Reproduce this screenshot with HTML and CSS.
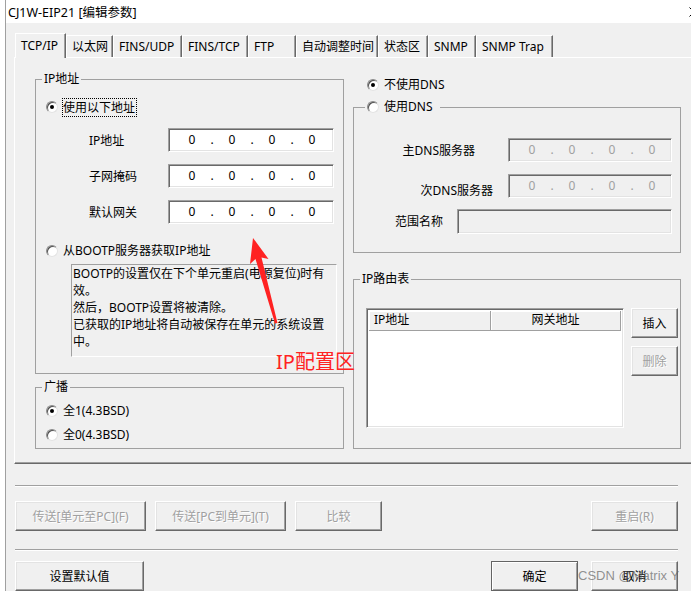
FILE: index.html
```html
<!DOCTYPE html>
<html lang="zh-CN">
<head>
    <meta charset="UTF-8">
    <meta name="viewport" content="width=device-width, initial-scale=1.0">
    <title>CJ1W-EIP21 [编辑参数]</title>
    <link rel="stylesheet" href="styles.css">
</head>
<body>

    <div class="window">
        <div class="titlebar">
            <span class="title">CJ1W-EIP21 [编辑参数]</span>
            <svg class="close" width="10" height="10" viewBox="0 0 10 10">
                <path d="M0.5 0.5 L9.5 9.5 M9.5 0.5 L0.5 9.5" stroke="#000" stroke-width="1" fill="none"/>
            </svg>
        </div>

        <div class="client">
            <!-- 标签页 -->
            <div class="tabs">
                <div class="tab active">TCP/IP</div>
                <div class="tab">以太网</div>
                <div class="tab">FINS/UDP</div>
                <div class="tab">FINS/TCP</div>
                <div class="tab">FTP</div>
                <div class="tab">自动调整时间</div>
                <div class="tab">状态区</div>
                <div class="tab">SNMP</div>
                <div class="tab">SNMP Trap</div>
            </div>

            <div class="panel">
                <!-- 左列 -->
                <div class="col-left">
                    <fieldset class="group ip-group">
                        <legend>IP地址</legend>
                        <div class="radio-row use-addr">
                            <span class="radio checked"></span>
                            <span class="focus">使用以下地址</span>
                        </div>
                        <div class="ip-rows">
                            <div class="ip-row">
                                <span class="ip-label">IP地址</span>
                                <div class="ipbox">
                                    <span class="oct">0</span><span class="dot">.</span><span class="oct">0</span><span class="dot">.</span><span class="oct">0</span><span class="dot">.</span><span class="oct">0</span>
                                </div>
                            </div>
                            <div class="ip-row">
                                <span class="ip-label">子网掩码</span>
                                <div class="ipbox">
                                    <span class="oct">0</span><span class="dot">.</span><span class="oct">0</span><span class="dot">.</span><span class="oct">0</span><span class="dot">.</span><span class="oct">0</span>
                                </div>
                            </div>
                            <div class="ip-row">
                                <span class="ip-label">默认网关</span>
                                <div class="ipbox">
                                    <span class="oct">0</span><span class="dot">.</span><span class="oct">0</span><span class="dot">.</span><span class="oct">0</span><span class="dot">.</span><span class="oct">0</span>
                                </div>
                            </div>
                        </div>
                        <div class="radio-row bootp">
                            <span class="radio"></span>
                            <span class="radio-text">从BOOTP服务器获取IP地址</span>
                        </div>
                        <div class="note">
                            BOOTP的设置仅在下个单元重启(电源复位)时有<br>
                            效。<br>
                            然后，BOOTP设置将被清除。<br>
                            已获取的IP地址将自动被保存在单元的系统设置<br>
                            中。
                        </div>
                    </fieldset>

                    <fieldset class="group bcast-group">
                        <legend>广播</legend>
                        <div class="radio-row">
                            <span class="radio checked"></span>
                            <span class="radio-text">全1(4.3BSD)</span>
                        </div>
                        <div class="radio-row">
                            <span class="radio"></span>
                            <span class="radio-text">全0(4.3BSD)</span>
                        </div>
                    </fieldset>
                </div>

                <!-- 右列 -->
                <div class="col-right">
                    <div class="radio-row no-dns">
                        <span class="radio checked"></span>
                        <span class="radio-text">不使用DNS</span>
                    </div>

                    <fieldset class="group dns-group">
                        <legend class="radio-legend">
                            <span class="radio"></span>
                            <span class="radio-text">使用DNS</span>
                        </legend>
                        <div class="dns-row first">
                            <span class="dns-label primary">主DNS服务器</span>
                            <div class="ipbox disabled">
                                <span class="oct">0</span><span class="dot">.</span><span class="oct">0</span><span class="dot">.</span><span class="oct">0</span><span class="dot">.</span><span class="oct">0</span>
                            </div>
                        </div>
                        <div class="dns-row second">
                            <span class="dns-label secondary">次DNS服务器</span>
                            <div class="ipbox disabled">
                                <span class="oct">0</span><span class="dot">.</span><span class="oct">0</span><span class="dot">.</span><span class="oct">0</span><span class="dot">.</span><span class="oct">0</span>
                            </div>
                        </div>
                        <div class="dns-row third">
                            <span class="dns-label scope">范围名称</span>
                            <div class="textbox disabled"></div>
                        </div>
                    </fieldset>

                    <fieldset class="group route-group">
                        <legend>IP路由表</legend>
                        <div class="route-body">
                            <div class="listview">
                                <div class="list-head">
                                    <div class="col-ip">IP地址</div>
                                    <div class="col-gw">网关地址</div>
                                </div>
                            </div>
                            <div class="route-buttons">
                                <button class="btn small">插入</button>
                                <button class="btn small" disabled>删除</button>
                            </div>
                        </div>
                    </fieldset>
                </div>
            </div>

            <!-- 底部按钮 -->
            <div class="footer">
                <div class="sep first"></div>
                <div class="btn-row">
                    <button class="btn send-a" disabled>传送[单元至PC](F)</button>
                    <button class="btn send-b" disabled>传送[PC到单元](T)</button>
                    <button class="btn compare" disabled>比较</button>
                    <button class="btn restart" disabled>重启(R)</button>
                </div>
                <div class="sep second"></div>
                <div class="btn-row last">
                    <button class="btn defaults">设置默认值</button>
                    <button class="btn ok">确定</button>
                    <button class="btn cancel">取消</button>
                </div>
            </div>
        </div>
    </div>

    <!-- 标注 -->
    <svg class="arrow" width="691" height="591" viewBox="0 0 691 591">
        <polygon points="253,238 268.5,259 261.5,257.5 277.5,323 275,323.5 255.5,259 250,264" fill="#f22"/>
    </svg>
    <div class="callout">IP配置区</div>
    <div class="watermark">CSDN @Matrix Y</div>

</body>
</html>
```

FILE: styles.css
```css
/* 基本 */
* {
    box-sizing: border-box;
}

body {
    margin: 0;
    width: 691px;
    height: 591px;
    overflow: hidden;
    position: relative;
    background: #fff;
    font-family: "Noto Sans", "Noto Sans CJK SC", sans-serif;
    font-size: 12px;
    color: #000;
}

/* 窗口 */
.window {
    margin-left: 5px;
    width: 700px;
    height: 591px;
    border-left: 1px solid #a0a0a0;
}

.titlebar {
    height: 23px;
    display: flex;
    align-items: center;
    padding-left: 2px;
    background: #fff;
    font-size: 12.5px;
}

.close {
    margin-left: auto;
    margin-right: 6px;
}

.client {
    height: 568px;
    padding: 10px 0 0 8px;
    background: #f0f0f0;
}

/* 标签页 */
.tabs {
    display: flex;
    align-items: flex-end;
    height: 24px;
    margin-left: 1px;
}

.tab {
    height: 22px;
    padding: 3px 0 0 5px;
    line-height: 16px;
    border: 1px solid;
    border-bottom: none;
    border-color: #fff #696969 transparent #fff;
    box-shadow: inset -1px 0 0 #a0a0a0;
    background: #f0f0f0;
    white-space: nowrap;
}

.tab.active {
    height: 25px;
    margin-bottom: -1px;
    padding-top: 4px;
    position: relative;
    z-index: 1;
}

.tab:nth-child(1) { width: 51px; }
.tab:nth-child(2) { width: 47px; }
.tab:nth-child(3) { width: 69px; }
.tab:nth-child(4) { width: 66px; }
.tab:nth-child(5) { width: 48px; }
.tab:nth-child(6) { width: 82px; }
.tab:nth-child(7) { width: 50px; }
.tab:nth-child(8) { width: 48px; }
.tab:nth-child(9) { width: 77px; }

.panel {
    width: 690px;
    height: 407px;
    display: flex;
    gap: 9px;
    padding: 13px 0 0 20px;
    border: 1px solid;
    border-color: #fff #696969 #696969 #fff;
    box-shadow: inset -1px -1px 0 #a0a0a0;
}

/* 分组框 */
.group {
    margin: 0;
    padding: 0;
    min-width: 0;
    border: 1px solid #a0a0a0;
}

.group legend {
    margin-left: 6px;
    padding: 0 2px;
    line-height: 16px;
    height: 16px;
}

.col-left {
    width: 309px;
}

.col-right {
    width: 328px;
}

/* 单选框 */
.radio-row {
    display: flex;
    align-items: center;
    height: 20px;
    padding-left: 10px;
}

.radio {
    flex: none;
    width: 12px;
    height: 12px;
    border-radius: 50%;
    background: #fff;
    border: 1px solid;
    border-color: #8a8a8a #e3e3e3 #e3e3e3 #8a8a8a;
    box-shadow: inset 1px 1px 0 #505050;
    position: relative;
}

.radio.checked::after {
    content: "";
    position: absolute;
    left: 3px;
    top: 3px;
    width: 4px;
    height: 4px;
    border-radius: 50%;
    background: #000;
}

.radio-text {
    margin-left: 5px;
    line-height: 16px;
}

.focus {
    margin-left: 4px;
    border: 1px dotted #000;
    line-height: 17px;
    padding-right: 1px;
}

/* IP地址 */
.use-addr {
    margin-top: 10px;
}

.ip-rows {
    display: flex;
    flex-direction: column;
    gap: 12px;
    margin-top: 11px;
}

.ip-row {
    display: flex;
    align-items: center;
    padding-left: 53px;
}

.ip-label {
    width: 79px;
}

.ipbox {
    width: 166px;
    height: 24px;
    display: flex;
    align-items: center;
    padding-left: 9px;
    background: #fff;
    border: 1px solid;
    border-color: #a0a0a0 #fff #fff #a0a0a0;
    box-shadow: inset 1px 1px 0 #696969, inset -1px -1px 0 #e3e3e3;
    padding-bottom: 2px;
}

.ipbox.disabled {
    width: 164px;
    background: #f0f0f0;
    color: #a0a0a0;
}

.oct {
    width: 28px;
    text-align: center;
}

.dot {
    width: 12px;
    text-align: center;
}

.bootp {
    margin-top: 17px;
}

.note {
    margin: 3px 0 16px 35px;
    width: 266px;
    height: 93px;
    padding: 0 0 0 1px;
    line-height: 17px;
    white-space: nowrap;
    border: 1px solid;
    border-color: #a0a0a0 #fff #fff #a0a0a0;
}

/* 广播 */
.bcast-group {
    margin-top: 5px;
    padding-bottom: 3px;
}

.bcast-group .radio-row {
    margin-top: 4px;
}

.bcast-group .radio-row:first-of-type {
    margin-top: 6px;
}

/* DNS */
.no-dns {
    margin-top: 4px;
    padding-left: 14px;
}

.dns-group {
    margin-top: 4px;
    padding-bottom: 19px;
}

.dns-group .radio-legend {
    margin-left: 11px;
    display: flex;
    align-items: center;
    padding-right: 8px;
}

.dns-row {
    display: flex;
    justify-content: flex-end;
    align-items: center;
    height: 24px;
    padding-right: 8px;
}

.dns-row.first { margin-top: 23px; }
.dns-row.second { margin-top: 12px; }
.dns-row.third { margin-top: 11px; }

.dns-label.primary { margin-right: 33px; }
.dns-label.secondary { margin-right: 15px; padding-top: 8px; }
.dns-label.scope { margin-right: 14px; }

.textbox {
    width: 215px;
    height: 25px;
    border: 1px solid;
    border-color: #a0a0a0 #fff #fff #a0a0a0;
    box-shadow: inset 1px 1px 0 #696969, inset -1px -1px 0 #e3e3e3;
}

.textbox.disabled {
    background: #f0f0f0;
}

/* IP路由表 */
.route-group {
    margin-top: 18px;
    padding-bottom: 20px;
}

.route-body {
    display: flex;
    gap: 7px;
    margin: 21px 0 0 12px;
}

.listview {
    width: 258px;
    height: 120px;
    background: #fff;
    border: 1px solid;
    border-color: #a0a0a0 #fff #fff #a0a0a0;
    box-shadow: inset 1px 1px 0 #696969, inset -1px -1px 0 #e3e3e3;
    padding: 2px 2px 0 2px;
}

.list-head {
    display: flex;
    height: 20px;
    line-height: 18px;
}

.list-head div {
    background: #f0f0f0;
    border-right: 1px solid #a0a0a0;
    border-bottom: 1px solid #a0a0a0;
    box-shadow: inset 1px 1px 0 #fff;
}

.col-ip {
    width: 123px;
    padding-left: 5px;
}

.col-gw {
    width: 131px;
    text-align: center;
}

.route-buttons {
    display: flex;
    flex-direction: column;
    gap: 8px;
}

/* 按钮 */
.btn {
    height: 30px;
    padding: 0;
    font-family: inherit;
    font-size: 12px;
    color: #000;
    background: #f0f0f0;
    border: 1px solid;
    border-color: #fff #696969 #696969 #fff;
    box-shadow: inset -1px -1px 0 #a0a0a0, inset 1px 1px 0 #e3e3e3;
}

.btn:disabled {
    color: #a0a0a0;
    text-shadow: 1px 1px 0 #fff;
}

.btn.small {
    width: 47px;
}

/* 底部 */
.footer {
    margin-left: 1px;
    width: 663px;
}

.sep {
    height: 2px;
    border-top: 1px solid #a0a0a0;
    border-bottom: 1px solid #fff;
}

.sep.first {
    margin-top: 21px;
}

.sep.second {
    margin-top: 18px;
}

.btn-row {
    display: flex;
    margin-top: 14px;
}

.btn-row.last {
    margin-top: 10px;
}

.send-a { width: 131px; }
.send-b { width: 131px; margin-left: 9px; }
.compare { width: 87px; margin-left: 9px; }
.restart { width: 87px; margin-left: auto; }

.defaults { width: 129px; }
.ok {
    width: 87px;
    margin-left: auto;
    border-color: #646464;
    box-shadow: inset 1px 1px 0 #fff, inset -1px -1px 0 #a0a0a0;
}
.cancel { width: 87px; margin-left: 13px; }

/* 标注 */
.arrow {
    position: absolute;
    left: 0;
    top: 0;
    pointer-events: none;
}

.callout {
    position: absolute;
    left: 276px;
    top: 350px;
    font-size: 20px;
    line-height: 24px;
    color: #f22;
}

.watermark {
    position: absolute;
    left: 578px;
    top: 567px;
    font-family: "Liberation Sans", Arial, sans-serif;
    font-size: 13px;
    line-height: 18px;
    color: rgba(100, 100, 100, 0.7);
    pointer-events: none;
}
```
